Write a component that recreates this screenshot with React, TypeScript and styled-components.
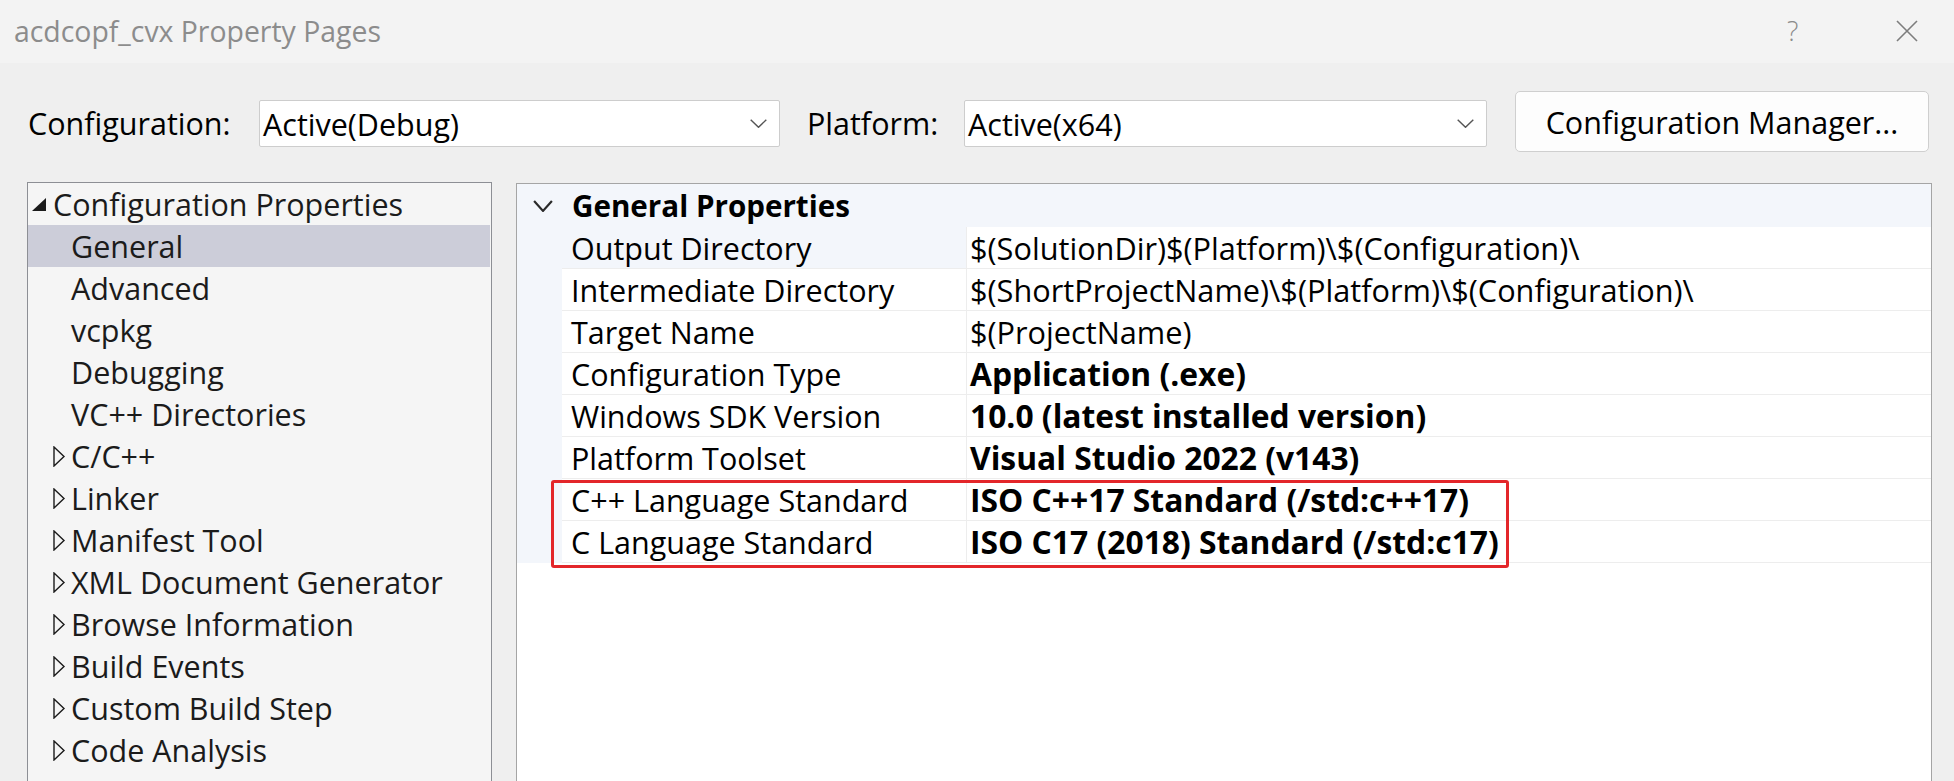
import React from "react";
import styled, { createGlobalStyle } from "styled-components";

const GlobalStyle = createGlobalStyle`
  html, body { margin: 0; padding: 0; background: #efefef; }
  body { font-family: "Open Sans", "Noto Sans", sans-serif; }
  * { box-sizing: border-box; }
`;

const FONT = `"Open Sans", "Noto Sans", sans-serif`;

const Window = styled.div`
  width: 1954px;
  height: 781px;
  overflow: hidden;
  background: #efefef;
  display: flex;
  flex-direction: column;
  font-family: ${FONT};
  font-size: 30.5px;
`;

const TitleBar = styled.div`
  height: 63px;
  flex: none;
  background: #f3f3f3;
  display: flex;
  align-items: center;
  padding: 0 0 2px 14px;
`;

const Title = styled.div`
  color: #8c8c8c;
  font-size: 28.4px;
  flex: 1;
  white-space: nowrap;
`;

const TitleButtons = styled.div`
  display: flex;
  align-items: center;
`;

const HelpGlyph = styled.span`
  color: #8a8a8a;
  font-size: 27px;
  font-weight: 300;
  width: 10px;
  margin-right: 99px;
  line-height: 1;
`;

const CloseBtn = styled.span`
  display: flex;
  width: 22px;
  height: 22px;
  margin-right: 36px;
`;

const Toolbar = styled.div`
  flex: none;
  display: flex;
  align-items: flex-start;
  padding: 28px 0 0 28px;
  height: 119px;
`;

const FieldLabel = styled.div<{ $w: number; $ml?: number }>`
  width: ${(p) => p.$w}px;
  margin-left: ${(p) => p.$ml ?? 0}px;
  margin-top: 9px;
  height: 47px;
  line-height: 47px;
  color: #000;
  white-space: nowrap;
`;

const Combo = styled.div<{ $w: number }>`
  width: ${(p) => p.$w}px;
  height: 47px;
  margin-top: 9px;
  background: #fff;
  border: 1px solid #cdcdcd;
  border-radius: 2px;
  display: flex;
  align-items: center;
  padding: 0 12px 0 3px;
  color: #000;
  white-space: nowrap;
`;

const ComboText = styled.span`
  flex: 1;
`;

const ActionButton = styled.div`
  width: 414px;
  height: 61px;
  margin-left: 28px;
  background: #fdfdfd;
  border: 1px solid #cfcfcf;
  border-radius: 5px;
  display: flex;
  align-items: center;
  justify-content: center;
  color: #000;
  white-space: nowrap;
`;

const Body = styled.div`
  flex: 1;
  display: flex;
  gap: 24px;
  padding-left: 27px;
  align-items: flex-start;
`;

const TreePanel = styled.div`
  width: 465px;
  height: 700px;
  background: #f5f5f5;
  border: 1px solid #8d8f95;
  padding: 0 1px 0 0;
`;

const TreeRow = styled.div<{ $level: number; $selected?: boolean }>`
  height: 42px;
  display: flex;
  align-items: center;
  padding-left: ${(p) => (p.$level === 0 ? 4 : 24)}px;
  background: ${(p) => (p.$selected ? "#cccdd9" : "transparent")};
  color: #1b1b1b;
  white-space: nowrap;
`;

const Expander = styled.span<{ $level: number }>`
  width: ${(p) => (p.$level === 0 ? 21 : 19)}px;
  flex: none;
  display: flex;
  align-items: center;
`;

const GridPanel = styled.div`
  width: 1416px;
  height: 700px;
  margin-top: 1px;
  background: #fff;
  border: 1px solid #a5a5a5;
  display: flex;
  flex-direction: column;
`;

const CategoryRow = styled.div`
  height: 43px;
  flex: none;
  background: #f3f6fb;
  display: flex;
  align-items: center;
  padding-left: 16px;
  font-weight: 700;
  font-size: 29.6px;
  color: #000;
`;

const CategoryChevron = styled.span`
  width: 39px;
  display: flex;
  align-items: center;
`;

const PropertyTable = styled.div`
  position: relative;
  display: flex;
`;

const Gutter = styled.div`
  width: 45px;
  flex: none;
  background: #f3f6fb;
`;

const Rows = styled.div`
  flex: 1;
  display: flex;
  flex-direction: column;
`;

const PropRow = styled.div`
  height: 42px;
  display: flex;
  border-bottom: 1px solid #ededed;
`;

const NameCell = styled.div<{ $selected?: boolean }>`
  width: 405px;
  flex: none;
  padding-left: 9px;
  display: flex;
  align-items: center;
  border-right: 1px solid #ededed;
  background: ${(p) => (p.$selected ? "#f3f6fb" : "#fff")};
  color: #000;
  white-space: nowrap;
`;

const ValueCell = styled.div<{ $bold?: boolean }>`
  flex: 1;
  padding-left: 3px;
  display: flex;
  align-items: center;
  font-weight: ${(p) => (p.$bold ? 700 : 400)};
  font-size: ${(p) => (p.$bold ? "31.8px" : "30.7px")};
  color: #000;
  white-space: nowrap;
`;

const Annotation = styled.div`
  position: absolute;
  left: 34px;
  top: 253px;
  width: 958px;
  height: 88px;
  border: 3px solid #e3262a;
  border-radius: 3px;
  pointer-events: none;
`;

const ChevronDown = ({ w, h, sw, color }: { w: number; h: number; sw: number; color: string }) => (
  <svg width={w} height={h} viewBox={`0 0 ${w} ${h}`} fill="none">
    <polyline
      points={`${sw / 2},${sw / 2} ${w / 2},${h - sw / 2} ${w - sw / 2},${sw / 2}`}
      stroke={color}
      strokeWidth={sw}
    />
  </svg>
);

const FilledTri = () => (
  <svg width="14" height="13" viewBox="0 0 14 13">
    <polygon points="14,0 14,13 0,13" fill="#1b1b1b" />
  </svg>
);

const HollowTri = () => (
  <svg width="13" height="21" viewBox="0 0 13 21" style={{ marginLeft: 1 }}>
    <polygon points="1,1 11,10.5 1,20" fill="none" stroke="#1b1b1b" strokeWidth="1.4" />
  </svg>
);

const treeItems: { label: string; level: number; expandable?: boolean; selected?: boolean }[] = [
  { label: "General", level: 1, selected: true },
  { label: "Advanced", level: 1 },
  { label: "vcpkg", level: 1 },
  { label: "Debugging", level: 1 },
  { label: "VC++ Directories", level: 1 },
  { label: "C/C++", level: 1, expandable: true },
  { label: "Linker", level: 1, expandable: true },
  { label: "Manifest Tool", level: 1, expandable: true },
  { label: "XML Document Generator", level: 1, expandable: true },
  { label: "Browse Information", level: 1, expandable: true },
  { label: "Build Events", level: 1, expandable: true },
  { label: "Custom Build Step", level: 1, expandable: true },
  { label: "Code Analysis", level: 1, expandable: true },
];

const props: { name: string; value: string; bold?: boolean; selected?: boolean }[] = [
  { name: "Output Directory", value: "$(SolutionDir)$(Platform)\\$(Configuration)\\", selected: true },
  { name: "Intermediate Directory", value: "$(ShortProjectName)\\$(Platform)\\$(Configuration)\\" },
  { name: "Target Name", value: "$(ProjectName)" },
  { name: "Configuration Type", value: "Application (.exe)", bold: true },
  { name: "Windows SDK Version", value: "10.0 (latest installed version)", bold: true },
  { name: "Platform Toolset", value: "Visual Studio 2022 (v143)", bold: true },
  { name: "C++ Language Standard", value: "ISO C++17 Standard (/std:c++17)", bold: true },
  { name: "C Language Standard", value: "ISO C17 (2018) Standard (/std:c17)", bold: true },
];

export default function App() {
  return (
    <>
      <GlobalStyle />
      <Window>
        <TitleBar>
          <Title>acdcopf_cvx Property Pages</Title>
          <TitleButtons>
            <HelpGlyph>?</HelpGlyph>
            <CloseBtn>
              <svg width="22" height="22" viewBox="0 0 22 22">
                <path d="M1 1 L21 21 M21 1 L1 21" stroke="#7d7d7d" strokeWidth="1.6" />
              </svg>
            </CloseBtn>
          </TitleButtons>
        </TitleBar>
        <Toolbar>
          <FieldLabel $w={231}>Configuration:</FieldLabel>
          <Combo $w={521}>
            <ComboText>Active(Debug)</ComboText>
            <ChevronDown w={17} h={9} sw={1.4} color="#555" />
          </Combo>
          <FieldLabel $w={157} $ml={27}>Platform:</FieldLabel>
          <Combo $w={523}>
            <ComboText>Active(x64)</ComboText>
            <ChevronDown w={17} h={9} sw={1.4} color="#555" />
          </Combo>
          <ActionButton>Configuration Manager...</ActionButton>
        </Toolbar>
        <Body>
          <TreePanel>
            <TreeRow $level={0}>
              <Expander $level={0}>
                <FilledTri />
              </Expander>
              Configuration Properties
            </TreeRow>
            {treeItems.map((it) => (
              <TreeRow key={it.label} $level={it.level} $selected={it.selected}>
                <Expander $level={it.level}>{it.expandable ? <HollowTri /> : null}</Expander>
                {it.label}
              </TreeRow>
            ))}
          </TreePanel>
          <GridPanel>
            <CategoryRow>
              <CategoryChevron>
                <ChevronDown w={20} h={12} sw={2.2} color="#2a2a2a" />
              </CategoryChevron>
              General Properties
            </CategoryRow>
            <PropertyTable>
              <Gutter />
              <Rows>
                {props.map((p) => (
                  <PropRow key={p.name}>
                    <NameCell $selected={p.selected}>{p.name}</NameCell>
                    <ValueCell $bold={p.bold}>{p.value}</ValueCell>
                  </PropRow>
                ))}
              </Rows>
              <Annotation />
            </PropertyTable>
          </GridPanel>
        </Body>
      </Window>
    </>
  );
}
